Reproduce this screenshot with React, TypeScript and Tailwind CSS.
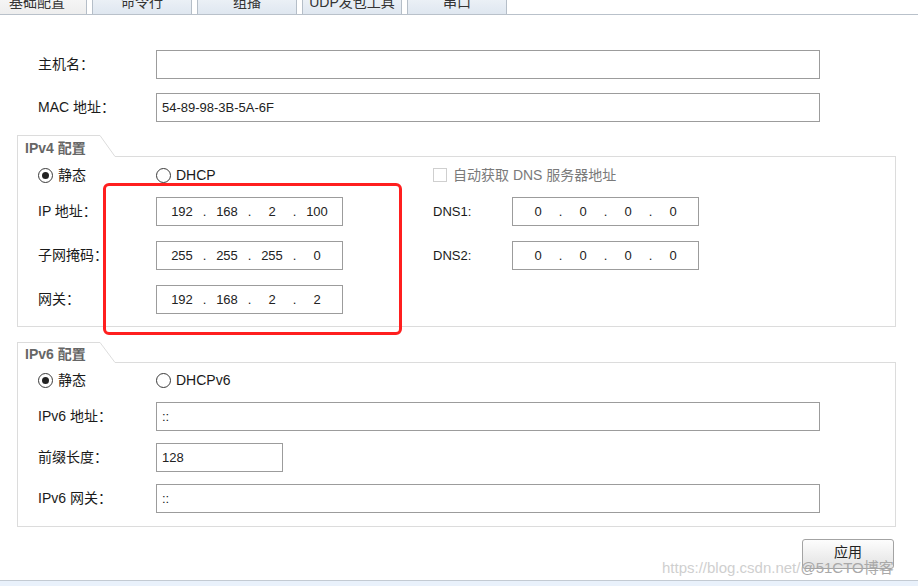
import React from "react";

const tabs = ["基础配置", "命令行", "组播", "UDP发包工具", "串口"];

const Radio = ({ checked, label }: { checked?: boolean; label: string }) => (
  <div className="flex items-center h-[16px]">
    <div className="w-[15px] h-[15px] rounded-full border border-[#3a3a3a] bg-white flex items-center justify-center">
      {checked && <div className="w-[7px] h-[7px] rounded-full bg-[#222]" />}
    </div>
    <span className="ml-[5px] text-[14px] text-[#1a1a1a]">{label}</span>
  </div>
);

const Input = ({ width, value }: { width: string; value?: string }) => (
  <div
    className={`${width} h-[29px] border border-[#9c9c9c] bg-white flex items-center pl-[5px] text-[13px] text-[#222]`}
  >
    {value}
  </div>
);

const IpInput = ({ parts }: { parts: string[] }) => (
  <div className="w-[187px] h-[29px] border border-[#9c9c9c] bg-white flex items-center pl-[5px] text-[13px] text-[#222]">
    {parts.map((p, i) => (
      <React.Fragment key={i}>
        {i > 0 && <span className="w-[5px] text-center">.</span>}
        <span className="w-[40px] text-center">{p}</span>
      </React.Fragment>
    ))}
  </div>
);

const Row = ({ label, children, className = "" }: { label: string; children: React.ReactNode; className?: string }) => (
  <div className={`flex items-center h-[29px] ${className}`}>
    <div className="w-[118px] text-[14px] text-[#1a1a1a]">{label}</div>
    {children}
  </div>
);

const GroupBox = ({
  title,
  headerH,
  bodyH,
  children,
}: {
  title: string;
  headerH: string;
  bodyH: string;
  children: React.ReactNode;
}) => (
  <div className="ml-[17px] w-[879px]">
    <div className={`flex ${headerH}`}>
      <div className="w-[83px] border-l border-t border-[#dcdcdc] pl-[7px] pt-[3px] flex items-center text-[14px] font-bold text-[#666]">
        {title}
      </div>
      <svg width="15" height="100%" viewBox="0 0 15 22" preserveAspectRatio="none" className="shrink-0">
        <line x1="0" y1="0.5" x2="15" y2="21.5" stroke="#dcdcdc" strokeWidth="1" />
      </svg>
      <div className="flex-1 border-b border-[#dcdcdc]" />
    </div>
    <div className={`${bodyH} border-l border-r border-b border-[#dcdcdc] pl-[20px]`}>{children}</div>
  </div>
);

export default function App() {
  return (
    <div className="relative w-[918px] h-[586px] bg-white flex flex-col overflow-hidden font-['Liberation_Sans','Noto_Sans_CJK_SC',sans-serif]">
      {/* tab strip, cut off at the top */}
      <div className="h-[15px] flex items-end gap-[5px] border-b border-[#b9c1ca] overflow-hidden">
        {tabs.map((t, i) => (
          <div
            key={t}
            className={`shrink-0 w-[100px] h-[24px] flex items-center justify-center text-[14px] text-[#333] border-x border-[#b5bec8] ${
              i === 0
                ? "-ml-[13px] bg-linear-to-b from-[#fafafa] to-[#eeeeee]"
                : "bg-linear-to-b from-[#f3f6fa] to-[#dfe7f0]"
            }`}
          >
            {t}
          </div>
        ))}
      </div>

      <div className="pl-[38px] mt-[35px]">
        <Row label="主机名：">
          <Input width="w-[664px]" />
        </Row>
        <Row label="MAC 地址：" className="mt-[14px]">
          <Input width="w-[664px]" value="54-89-98-3B-5A-6F" />
        </Row>
      </div>

      <div className="mt-[13px]">
        <GroupBox title="IPv4 配置" headerH="h-[22px]" bodyH="h-[170px] pt-[10px]">
          <div className="flex items-center h-[16px]">
            <div className="w-[118px]">
              <Radio checked label="静态" />
            </div>
            <div className="w-[277px]">
              <Radio label="DHCP" />
            </div>
            <div className="flex items-center">
              <div className="w-[14px] h-[14px] border border-[#cfcfcf] bg-white" />
              <span className="ml-[6px] text-[14px] text-[#7a7a7a]">自动获取 DNS 服务器地址</span>
            </div>
          </div>
          {[
            { l: "IP 地址：", ip: ["192", "168", "2", "100"], d: "DNS1:" },
            { l: "子网掩码：", ip: ["255", "255", "255", "0"], d: "DNS2:" },
            { l: "网关：", ip: ["192", "168", "2", "2"] },
          ].map((r, i) => (
            <Row key={r.l} label={r.l} className={i === 0 ? "mt-[14px]" : "mt-[15px]"}>
              <IpInput parts={r.ip} />
              {r.d && (
                <>
                  <div className="ml-[90px] w-[79px] text-[13px] text-[#1a1a1a]">{r.d}</div>
                  <IpInput parts={["0", "0", "0", "0"]} />
                </>
              )}
            </Row>
          ))}
        </GroupBox>
      </div>

      <div className="mt-[15px]">
        <GroupBox title="IPv6 配置" headerH="h-[21px]" bodyH="h-[164px] pt-[9px]">
          <div className="flex items-center h-[16px]">
            <div className="w-[118px]">
              <Radio checked label="静态" />
            </div>
            <Radio label="DHCPv6" />
          </div>
          <Row label="IPv6 地址：" className="mt-[14px]">
            <Input width="w-[664px]" value="::" />
          </Row>
          <Row label="前缀长度：" className="mt-[12px]">
            <Input width="w-[127px]" value="128" />
          </Row>
          <Row label="IPv6 网关：" className="mt-[12px]">
            <Input width="w-[664px]" value="::" />
          </Row>
        </GroupBox>
      </div>

      <div className="mt-[12px] flex justify-end pr-[24px]">
        <button className="w-[92px] h-[30px] rounded-[3px] border border-[#a3a3a3] bg-linear-to-b from-[#fdfdfd] to-[#e3e3e3] text-[14px] text-[#222] pb-[4px]">
          应用
        </button>
      </div>

      <div className="mt-auto h-[6px] border-t border-[#c3cad2] bg-[#e9f1fb]" />

      {/* red highlight drawn over the screenshot */}
      <div className="absolute left-[103px] top-[183px] w-[299px] h-[152px] border-[3px] border-[#ff1f1f] rounded-[6px]" />

      {/* watermark */}
      <div className="absolute left-[662px] top-[557px] text-[15px] whitespace-nowrap">
        <span className="text-[#cfcfcf]">https://blog.csdn.net/</span>
        <span className="text-[#a9a9a9]">@51CTO博客</span>
      </div>
    </div>
  );
}
